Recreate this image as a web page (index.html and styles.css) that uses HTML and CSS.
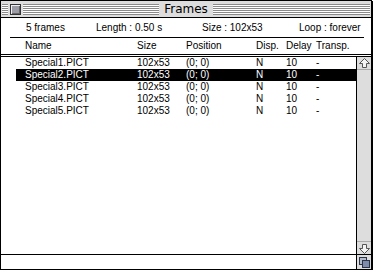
FILE: index.html
```html
<!DOCTYPE html>
<html>
<head>
<meta charset="utf-8">
<link rel="stylesheet" href="styles.css">
</head>
<body>
<div class="window">
  <div class="titlebar">
    <div class="tb-left"><span class="stripe lead"></span><span class="closebox"></span><span class="stripe fill"></span></div>
    <div class="title">Frames</div>
    <div class="tb-right"><span class="stripe fill"></span></div>
  </div>
  <div class="info">
    <div class="info-inner">
      <span class="i1">5 frames</span><span class="i2">Length : 0.50 s</span><span class="i3">Size : 102x53</span><span class="i4">Loop : forever</span>
    </div>
  </div>
  <div class="header cols">
    <span>Name</span><span>Size</span><span>Position</span><span>Disp.</span><span>Delay</span><span>Transp.</span>
  </div>
  <div class="body">
    <div class="list">
      <div class="row cols"><span>Special1.PICT</span><span>102x53</span><span>(0; 0)</span><span>N</span><span>10</span><span>-</span></div>
      <div class="row cols selected"><span>Special2.PICT</span><span>102x53</span><span>(0; 0)</span><span>N</span><span>10</span><span>-</span></div>
      <div class="row cols"><span>Special3.PICT</span><span>102x53</span><span>(0; 0)</span><span>N</span><span>10</span><span>-</span></div>
      <div class="row cols"><span>Special4.PICT</span><span>102x53</span><span>(0; 0)</span><span>N</span><span>10</span><span>-</span></div>
      <div class="row cols"><span>Special5.PICT</span><span>102x53</span><span>(0; 0)</span><span>N</span><span>10</span><span>-</span></div>
    </div>
    <div class="scrollbar">
      <div class="arrow up"><svg width="11" height="11" viewBox="0 0 11 11"><polygon points="5.5,0.5 10.5,5.5 7.5,5.5 7.5,9.5 3.5,9.5 3.5,5.5 0.5,5.5" fill="#f4f4f4" stroke="#555" stroke-width="1"/></svg></div>
      <div class="track"></div>
      <div class="arrow down"><svg width="11" height="11" viewBox="0 0 11 11"><polygon points="5.5,10.5 10.5,5.5 7.5,5.5 7.5,1.5 3.5,1.5 3.5,5.5 0.5,5.5" fill="#f4f4f4" stroke="#555" stroke-width="1"/></svg></div>
    </div>
  </div>
  <div class="footer">
    <div class="footer-space"></div>
    <div class="growbox"><svg width="11" height="11" viewBox="0 0 11 11"><rect x="0.5" y="0.5" width="7" height="7" fill="#b4bccc" stroke="#2c3448"/><rect x="3.5" y="3.5" width="7" height="7" fill="#7f8cab" stroke="#2c3448"/></svg></div>
  </div>
</div>
</body>
</html>
```

FILE: styles.css
```css
* { box-sizing: border-box; }
html, body { margin: 0; padding: 0; background: #fff; }
body {
  font-family: "Liberation Sans", Arial, sans-serif;
  font-size: 10px;
  color: #000;
}
.window {
  width: 372px;
  height: 270px;
  border: 1px solid #000;
  box-shadow: 1px 1px 0 #000;
  display: flex;
  flex-direction: column;
  background: #fff;
}
.titlebar {
  height: 17px;
  flex: none;
  border-bottom: 1px solid #000;
  background: #dddddd;
  display: grid;
  grid-template-columns: 1fr auto 1fr;
  padding: 3px 1px 0 1px;
}
.tb-left, .tb-right { display: flex; align-items: flex-start; }
.stripe {
  height: 11px;
  background: repeating-linear-gradient(to bottom, #8a8a8a 0 1px, #ffffff 1px 2px);
}
.stripe.lead { width: 6px; }
.stripe.fill { flex: 1; }
.closebox {
  width: 11px;
  height: 11px;
  margin: 0 2px;
  border: 1px solid #333;
  background: #9c9ca6;
  box-shadow: inset 1px 1px 0 #f0f0f0, inset -1px -1px 0 #666;
}
.title {
  font-family: "DejaVu Sans", sans-serif;
  font-size: 12px;
  line-height: 11px;
  padding: 0 5px;
  margin-top: 0;
}
.info { height: 20px; flex: none; }
.info-inner {
  margin: 0 7px 0 9px;
  height: 20px;
  border-bottom: 1px solid #000;
  line-height: 19px;
  padding-left: 16px;
  display: flex;
  white-space: nowrap;
}
.i1 { width: 70px; }
.i2 { width: 106px; }
.i3 { width: 97px; }
.cols {
  display: grid;
  grid-template-columns: 112px 49px 70px 30px 30px 1fr;
  white-space: nowrap;
}
.header {
  height: 19px;
  flex: none;
  line-height: 16px;
  padding-left: 24px;
  border-bottom: 3px double #000;
}
.body {
  flex: 1;
  display: flex;
  min-height: 0;
}
.list { flex: 1; }
.row {
  height: 12px;
  line-height: 12px;
  margin-left: 15px;
  padding-left: 9px;
}
.row.selected { background: #000; color: #fff; }
.scrollbar {
  width: 15px;
  flex: none;
  border-left: 1px solid #000;
  background: #dddddd;
  display: flex;
  flex-direction: column;
}
.arrow {
  height: 13px;
  display: flex;
  align-items: center;
  justify-content: center;
  flex: none;
}
.arrow.up { border-bottom: 1px solid #aaa; }
.arrow.down { border-top: 1px solid #aaa; }
.track { flex: 1; }
.footer {
  height: 15px;
  flex: none;
  border-top: 1px solid #000;
  display: flex;
}
.footer-space { flex: 1; }
.growbox {
  width: 15px;
  border-left: 1px solid #000;
  background: #dddddd;
  display: flex;
  align-items: center;
  justify-content: center;
}
```
